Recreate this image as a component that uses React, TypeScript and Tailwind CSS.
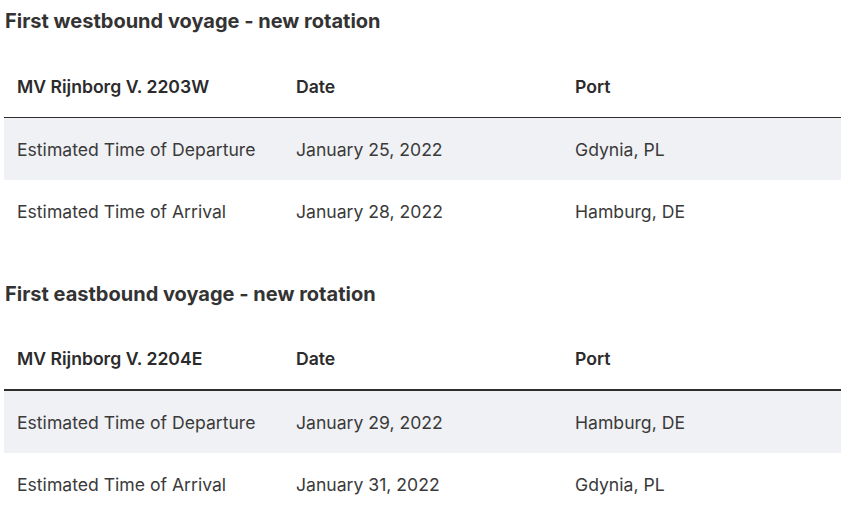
const voyages = [
  {
    title: "First westbound voyage - new rotation",
    vessel: "MV Rijnborg V. 2203W",
    border: "border-b",
    rows: [
      ["Estimated Time of Departure", "January 25, 2022", "Gdynia, PL"],
      ["Estimated Time of Arrival", "January 28, 2022", "Hamburg, DE"],
    ],
  },
  {
    title: "First eastbound voyage - new rotation",
    vessel: "MV Rijnborg V. 2204E",
    border: "border-b-2",
    rows: [
      ["Estimated Time of Departure", "January 29, 2022", "Hamburg, DE"],
      ["Estimated Time of Arrival", "January 31, 2022", "Gdynia, PL"],
    ],
  },
];

export default function App() {
  return (
    <div className="bg-white min-h-screen px-1 pt-[7px] text-[#333] font-['Inter',sans-serif]">
      {voyages.map((v, i) => (
        <section key={i} className={i > 0 ? "mt-[37px]" : ""}>
          <h2 className="pl-px text-[20px] leading-[28px] font-bold text-[#333]">{v.title}</h2>

          <table className="mt-5 w-[837px] table-fixed border-collapse">
            <thead>
              <tr className={`${v.border} border-[#2d2d2d]`}>
                <th className="h-[62px] pl-[13px] pt-[2px] text-left text-[17.6px] font-semibold text-[#2b2b2b]">{v.vessel}</th>
                <th className="h-[62px] pl-[13px] pt-[2px] text-left text-[17.6px] font-semibold text-[#2b2b2b]">Date</th>
                <th className="h-[62px] pl-[13px] pt-[2px] text-left text-[17.6px] font-semibold text-[#2b2b2b]">Port</th>
              </tr>
            </thead>
            <tbody>
              {v.rows.map((r, j) => (
                <tr key={j} className={j % 2 === 0 ? "bg-[#f0f1f5]" : ""}>
                  {r.map((c, k) => (
                    <td key={k} className="h-[63px] pl-[13px] pt-[2px] text-[17.6px] text-[#3a3a3a]">
                      {c}
                    </td>
                  ))}
                </tr>
              ))}
            </tbody>
          </table>
        </section>
      ))}
    </div>
  );
}
